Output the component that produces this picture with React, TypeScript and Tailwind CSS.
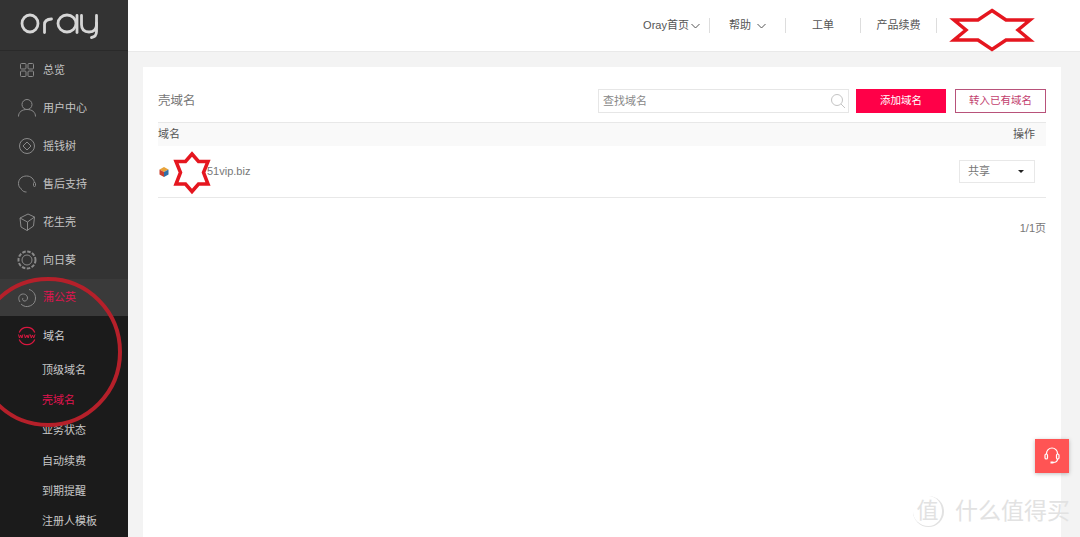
import React from "react";

const NavIcon = ({ children }: { children: React.ReactNode }) => (
  <svg width="20" height="20" viewBox="0 0 20 20" fill="none" stroke="#8a8a8a" strokeWidth="1" className="shrink-0">
    {children}
  </svg>
);

const navItems: { label: string; active?: boolean; icon: React.ReactNode }[] = [
  {
    label: "总览",
    icon: (
      <>
        <rect x="3.5" y="3.5" width="5.5" height="5.5" rx="1" />
        <rect x="11" y="3.5" width="5.5" height="5.5" rx="1" />
        <rect x="3.5" y="11" width="5.5" height="5.5" rx="1" />
        <rect x="11" y="11" width="5.5" height="5.5" rx="1" />
      </>
    ),
  },
  {
    label: "用户中心",
    icon: (
      <>
        <circle cx="10" cy="6.5" r="5" />
        <path d="M1.5 18.5c0-4.5 3.5-7 8.5-7s8.5 2.500 8.500 7" />
      </>
    ),
  },
  {
    label: "摇钱树",
    icon: (
      <>
        <circle cx="10" cy="10" r="7.500" />
        <path d="M10 6l4 4-4 4-4-4z" />
      </>
    ),
  },
  {
    label: "售后支持",
    icon: (
      <>
        <path d="M5 15.500C2.500 14 1.500 12 1.500 9.500c0-4.500 3.500-7.500 8-7.500s7.500 3 8 7" />
        <path d="M4.500 15.500c1.500 2 3 2.500 5 2.500" />
        <rect x="16.500" y="8.500" width="2" height="4" rx="1" />
      </>
    ),
  },
  {
    label: "花生壳",
    icon: (
      <>
        <path d="M3 6l8-4 6.500 3-1 9-6.500 4.500-6-3.500z" />
        <path d="M3 6l7.500 4 7-5M10.500 10v8.500" />
      </>
    ),
  },
  {
    label: "向日葵",
    icon: (
      <>
        <circle cx="10" cy="10" r="5" />
        <circle cx="10" cy="10" r="8.500" strokeDasharray="3.500 1.500" strokeWidth="2" />
      </>
    ),
  },
  {
    label: "蒲公英",
    active: true,
    icon: (
      <>
        <path d="M12 1.500c4 1 6.500 4.500 6.500 8.500a8.500 8.500 0 0 1-14.500 6" />
        <path d="M3 14c-2-3-1.500-6 1-7.500 3-1.500 6.500.5 6.500 3.500 0 2-2 3.500-3.500 3-1.500-.5-1.800-2-1-3" />
      </>
    ),
  },
];

const subItems = [
  { label: "顶级域名" },
  { label: "壳域名", active: true },
  { label: "业务状态" },
  { label: "自动续费" },
  { label: "到期提醒" },
  { label: "注册人模板" },
];

const topItems = [
  { label: "Oray首页", w: "w-[76px]", chevron: true },
  { label: "帮助", w: "w-[76px]", chevron: true },
  { label: "工单", w: "w-[75px]" },
  { label: "产品续费", w: "w-[76px]" },
];

function Chevron({ gap }: { gap: string }) {
  return (
    <svg width="9" height="6" viewBox="0 0 9 6" fill="none" stroke="#555" strokeWidth="1" className={gap}>
      <path d="M.5 1l4 4 4-4" />
    </svg>
  );
}

export default function App() {
  return (
    <div className="relative flex h-[537px] w-[1080px] overflow-hidden bg-[#f3f3f3] font-['Liberation_Sans','Noto_Sans_CJK_SC',sans-serif] text-[11px] text-[#555]">
      <aside className="flex w-[128px] shrink-0 flex-col bg-[#333333]">
        <div className="flex h-[51px] shrink-0 items-start border-b border-[#2a2a2a] pl-[20px] pt-[11px]">
          <svg width="82" height="28" viewBox="0 0 82 28" fill="none" stroke="#d6d6d6" strokeWidth="2.800" strokeLinecap="round">
            <ellipse cx="10" cy="12.500" rx="8" ry="8.500" />
            <path d="M24.500 21.500v-8c0-3.500 2-5.200 7-5.500" />
            <ellipse cx="47" cy="12.500" rx="9" ry="8.500" />
            <path d="M57 4.500v17" />
            <path d="M61.500 4.500v9c0 5 3 7.500 7.500 7.500s7.500-2.500 7.500-7.500v-9" />
            <path d="M76.500 12v8.500c0 3.500-2 5.500-5 6" />
          </svg>
        </div>
        <nav className="flex flex-col">
          {navItems.map((it) => (
            <div
              key={it.label}
              className={
                it.active
                  ? "flex h-[37px] items-center gap-[6px] bg-[#3a3a3a] pl-[17px] text-[#e0134f]"
                  : "flex h-[38px] items-center gap-[6px] pl-[17px] text-[#c4c4c4]"
              }
            >
              <NavIcon>{it.icon}</NavIcon>
              <span>{it.label}</span>
            </div>
          ))}
        </nav>
        <div className="flex flex-1 flex-col bg-[#1b1b1b]">
          <div className="flex h-[39px] shrink-0 items-center gap-[6px] pl-[17px] pt-px text-[#d0d0d0]">
            <svg width="20" height="20" viewBox="0 0 20 20" fill="none" stroke="#d8173f" strokeWidth="1.200" className="shrink-0">
              <path d="M2.200 6.500a8.500 8.500 0 0 1 15.600 0M2.200 13.500a8.500 8.500 0 0 0 15.600 0" />
              <path d="M1.500 8.500l1 3.500 1.200-3 1.200 3 1-3.500M7.400 8.500l1 3.500 1.600-3 1.200 3 1-3.500M13.300 8.500l1 3.500 1.200-3 1.200 3 1.300-3.500" strokeWidth="1" />
            </svg>
            <span>域名</span>
          </div>
          {subItems.map((s) => (
            <div
              key={s.label}
              className={
                s.active
                  ? "flex h-[30.3px] shrink-0 items-center pl-[42px] text-[#e0134f]"
                  : "flex h-[30.3px] shrink-0 items-center pl-[42px] text-[#c8c8c8]"
              }
            >
              {s.label}
            </div>
          ))}
        </div>
      </aside>

      <div className="flex min-w-0 flex-1 flex-col">
        <header className="flex h-[52px] shrink-0 items-center justify-end border-b border-[#e9e9e9] bg-white pr-[143px]">
          {topItems.map((t, i) => (
            <div key={t.label} className={`flex h-[15px] items-center justify-center border-r border-[#dddddd] text-[#555] ${t.w}`}>
              <span>{t.label}</span>
              {t.chevron && <Chevron gap={i === 0 ? "ml-[2px]" : "ml-[6px]"} />}
            </div>
          ))}
        </header>

        <main className="ml-[15px] mr-[19px] mt-[15px] min-h-0 flex-1 bg-white px-[15px] pt-[22px]">
          <div className="flex h-[24px] items-center">
            <h1 className="text-[12.500px] font-normal text-[#777]">壳域名</h1>
            <div className="ml-auto flex h-[24px] w-[251px] items-center justify-between border border-[#e6e6e6] pl-[4px] pr-[2px] text-[#888]">
              <span>查找域名</span>
              <svg width="16" height="16" viewBox="0 0 16 16" fill="none" stroke="#c4c4c4" strokeWidth="1">
                <circle cx="7" cy="7" r="5.500" />
                <path d="M11 11l4 4" />
              </svg>
            </div>
            <button className="ml-[7px] h-[24px] w-[90px] bg-[#ff0048] text-center text-[10.5px] text-white">添加域名</button>
            <button className="ml-[9px] h-[24px] w-[91px] border border-[#b8527a] bg-white text-center text-[10.5px] text-[#c2406e]">转入已有域名</button>
          </div>

          <div className="mt-[9px] flex h-[24px] items-center justify-between border-t border-[#e8e8e8] bg-[#f9f9f9] pr-[11px] text-[#555]">
            <span>域名</span>
            <span>操作</span>
          </div>

          <div className="flex h-[52px] items-center justify-between border-b border-[#e8e8e8] pr-[11px]">
            <div className="flex items-center">
              <svg width="10" height="10" viewBox="0 0 10 10" className="ml-px shrink-0">
                <path d="M5 0l4.500 2.500L5 5 .5 2.500z" fill="#e8a33a" />
                <path d="M.5 2.500L5 5v5L.5 7.500z" fill="#c9402f" />
                <path d="M9.500 2.500L5 5v5l4.500-2.500z" fill="#2f6fa8" />
              </svg>
              <span className="ml-[38px] text-[#777]">51vip.biz</span>
            </div>
            <div className="flex h-[23px] w-[76px] items-center justify-between border border-[#e8e8e8] pl-[8px] pr-[10px] text-[#777]">
              <span>共享</span>
              <span className="h-0 w-0 border-x-[3px] border-t-[3px] border-x-transparent border-t-[#222]" />
            </div>
          </div>

          <div className="mt-[22px] text-right text-[#777]">1/1页</div>
        </main>
      </div>

      {/* Red annotations drawn over the screenshot */}
      <svg className="pointer-events-none absolute left-0 top-0" width="1080" height="537" fill="none">
        <ellipse cx="48" cy="352" rx="72" ry="73" stroke="#b5202a" strokeWidth="4" />
        <path d="M992 10.500L1006 20H1030L1018 30L1030 40H1006L992 49.500L978 40H954L966 30L954 20H978Z" fill="#fff" stroke="#e5161f" strokeWidth="3.500" />
        <path d="M192 154L198.500 161.500H208L203.500 172.500L208 184H198.500L192 191.500L185.500 184H176L180.500 172.500L176 161.500H185.500Z" fill="#fff" stroke="#e5161f" strokeWidth="3.500" />
      </svg>

      <div className="absolute left-[1035px] top-[439px] flex h-[34px] w-[34px] items-center justify-center bg-[#ff5454] shadow-[0_1px_4px_rgba(0,0,0,0.25)]">
        <svg width="20" height="20" viewBox="0 0 20 20" fill="none" stroke="#fff" strokeWidth="1.200">
          <path d="M4.500 8V7.500a5.500 5.500 0 0 1 11 0V8" />
          <rect x="3" y="8" width="2.500" height="5" rx="1.250" />
          <rect x="14.500" y="8" width="2.500" height="5" rx="1.250" />
          <path d="M15.500 13c0 2.500-2 3.500-4.500 3.500" />
          <path d="M8.500 16.500h3" strokeWidth="2" />
        </svg>
      </div>

      <div className="absolute left-[913px] top-[496px] flex items-center text-[#e2e2e2]">
        <span className="flex h-[31px] w-[31px] items-center justify-center rounded-full border-r-2 border-b border-[#e2e2e2] text-[22px] leading-none">值</span>
        <span className="ml-[11px] text-[23px] leading-none">什么值得买</span>
      </div>
    </div>
  );
}
